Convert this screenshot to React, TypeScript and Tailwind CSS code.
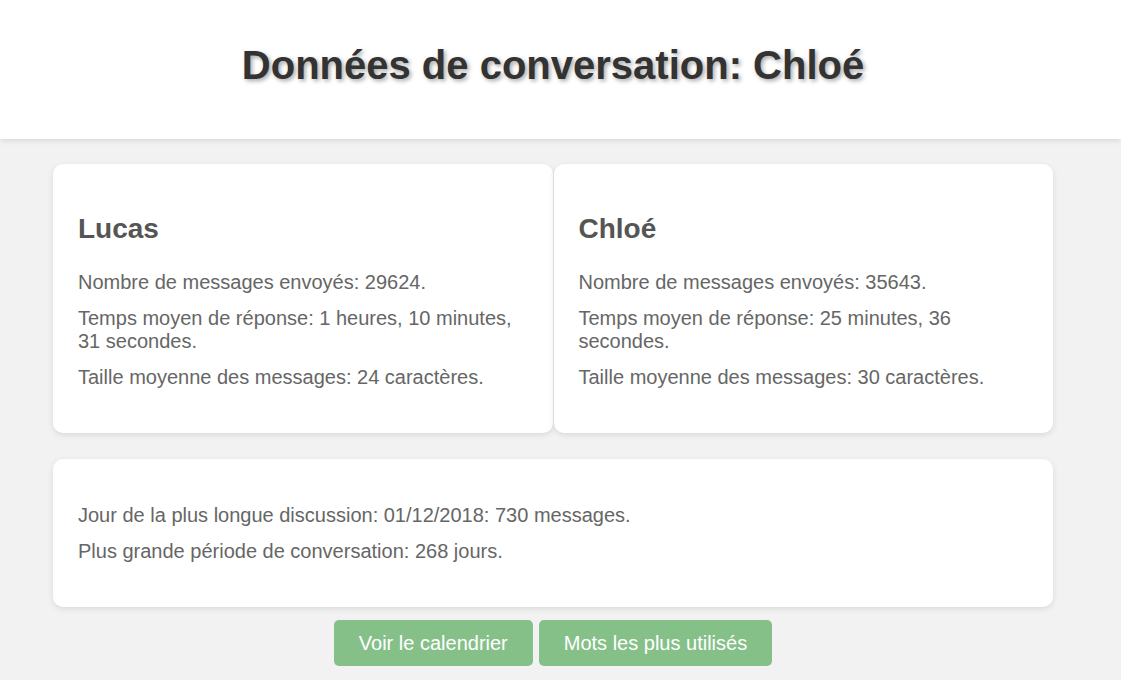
import React from "react";

const font = { fontFamily: '"Liberation Sans", Arial, sans-serif' };

function StatCard({ name, lines }: { name: string; lines: string[] }) {
  return (
    <div className="flex-1 bg-white rounded-[10px] shadow-[0_2px_6px_rgba(0,0,0,0.1)] p-[25px]">
      <h2 className="mt-[24px] mb-[26px] text-[28px] leading-[32px] font-bold text-[#555]">{name}</h2>
      <div className="flex flex-col gap-[13px] mb-[19px]">
        {lines.map((l) => (
          <p key={l} className="text-[20px] leading-[23px] text-[#666]">{l}</p>
        ))}
      </div>
    </div>
  );
}

export default function App() {
  return (
    <div className="min-h-[680px] bg-[#f2f2f2]" style={font}>
      <header className="h-[139px] bg-white shadow-[0_2px_5px_rgba(0,0,0,0.1)] relative">
        <div className="w-[1106px] pt-[42px]">
          <h1 className="text-center text-[40px] leading-[46px] font-bold text-[#333] [text-shadow:2px_2px_4px_rgba(0,0,0,0.35)]">
            Données de conversation: Chloé
          </h1>
        </div>
      </header>
      <main className="w-[1106px] pt-[25px] pb-[14px]">
        <div className="w-[1000px] mx-auto flex flex-col">
          <div className="flex gap-[1px]">
            <StatCard
              name="Lucas"
              lines={[
                "Nombre de messages envoyés: 29624.",
                "Temps moyen de réponse: 1 heures, 10 minutes, 31 secondes.",
                "Taille moyenne des messages: 24 caractères.",
              ]}
            />
            <StatCard
              name="Chloé"
              lines={[
                "Nombre de messages envoyés: 35643.",
                "Temps moyen de réponse: 25 minutes, 36 secondes.",
                "Taille moyenne des messages: 30 caractères.",
              ]}
            />
          </div>
          <div className="mt-[26px] bg-white rounded-[10px] shadow-[0_2px_6px_rgba(0,0,0,0.1)] p-[25px]">
            <div className="flex flex-col gap-[13px] mt-[20px] mb-[19px]">
              <p className="text-[20px] leading-[23px] text-[#666]">Jour de la plus longue discussion: 01/12/2018: 730 messages.</p>
              <p className="text-[20px] leading-[23px] text-[#666]">Plus grande période de conversation: 268 jours.</p>
            </div>
          </div>
          <div className="mt-[13px] flex justify-center gap-[6px]">
            <button className="h-[46px] px-[25px] rounded-[5px] bg-[#86c089] text-white text-[20px] leading-[23px]">Voir le calendrier</button>
            <button className="h-[46px] px-[25px] rounded-[5px] bg-[#86c089] text-white text-[20px] leading-[23px]">Mots les plus utilisés</button>
          </div>
        </div>
      </main>
    </div>
  );
}
